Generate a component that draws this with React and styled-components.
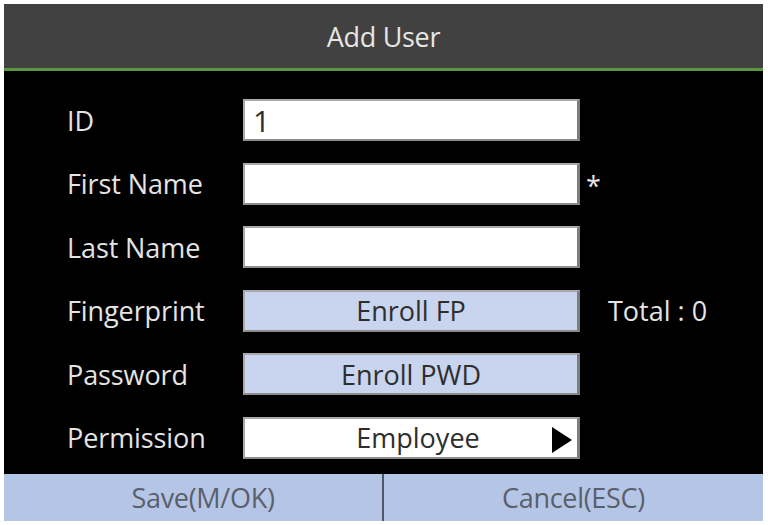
import React from 'react'
import styled, { createGlobalStyle } from 'styled-components'

const GlobalStyle = createGlobalStyle`
  html, body {
    margin: 0;
    padding: 0;
    background: #ffffff;
  }
  body {
    font-family: 'Open Sans', 'Noto Sans', sans-serif;
  }
`

const Page = styled.div`
  width: 768px;
  height: 525px;
  padding: 4px 5px 4px 4px;
  box-sizing: border-box;
`

const Screen = styled.div`
  display: flex;
  flex-direction: column;
  height: 100%;
  background: #000;
`

const Header = styled.div`
  height: 64px;
  display: flex;
  align-items: center;
  justify-content: center;
  background: #414141;
  border-bottom: 3px solid #5d9640;
  color: #e6e6e6;
  font-size: 27px;
  letter-spacing: -0.3px;
`

const Form = styled.div`
  flex: 1;
  display: grid;
  grid-template-columns: 176px 337px auto;
  grid-auto-rows: 42px;
  row-gap: 21.5px;
  align-items: center;
  padding: 28px 0 0 63px;
`

const Label = styled.div`
  color: #e4e4e4;
  font-size: 27px;
  letter-spacing: -0.1px;
`

const Field = styled.div`
  height: 42px;
  box-sizing: border-box;
  display: flex;
  align-items: center;
  justify-content: ${p => (p.$center ? 'center' : 'flex-start')};
  position: relative;
  padding: 0 8px 0 ${p => p.$indent || 8}px;
  background: ${p => (p.$button ? '#c9d4ee' : '#ffffff')};
  border: 2px solid #a9a9a9;
  border-right: 3px solid #7d7d7d;
  border-bottom-color: #8c8c8c;
  color: #2e2e2e;
  font-size: 27px;
`

const Value = styled.span`
  font-size: 30px;
`

const Arrow = styled.svg`
  position: absolute;
  right: 4px;
  top: 8px;
`

const Note = styled.div`
  color: #e4e4e4;
  font-size: 27px;
  padding-left: ${p => p.$pad || 0}px;
  align-self: ${p => (p.$top ? 'start' : 'center')};
  margin-top: ${p => (p.$top ? 4 : 0)}px;
`

const Footer = styled.div`
  height: 47px;
  display: grid;
  grid-template-columns: 378px 1fr;
  background: #b5c5e6;
`

const FooterButton = styled.div`
  display: flex;
  align-items: center;
  justify-content: center;
  padding-left: ${p => p.$shift || 0}px;
  color: #5a5f6c;
  font-size: 27px;
  letter-spacing: -0.3px;
  border-left: ${p => (p.$divider ? '2px solid #4f566a' : 'none')};
`

const rows = [
  { label: 'ID', value: '1' },
  { label: 'First Name', value: '', note: '*' },
  { label: 'Last Name', value: '' },
  { label: 'Fingerprint', button: 'Enroll FP', note: 'Total : 0' },
  { label: 'Password', button: 'Enroll PWD' },
  { label: 'Permission', select: 'Employee' },
]

export default function App() {
  return (
    <Page>
      <GlobalStyle />
      <Screen>
        <Header>Add User</Header>
        <Form>
          {rows.map((row, index) => (
            <React.Fragment key={index}>
              <Label>{row.label}</Label>
              {row.button ? (
                <Field $button $center>{row.button}</Field>
              ) : row.select ? (
                <Field $center $indent={22}>
                  {row.select}
                  <Arrow width="22" height="26" viewBox="0 0 22 26">
                    <polygon points="1,0 21,13 1,26" fill="#000" />
                  </Arrow>
                </Field>
              ) : (
                <Field>
                  <Value>{row.value}</Value>
                </Field>
              )}
              {row.note === '*' ? (
                <Note $pad={6} $top>*</Note>
              ) : row.note ? (
                <Note $pad={28}>{row.note}</Note>
              ) : (
                <div />
              )}
            </React.Fragment>
          ))}
        </Form>
        <Footer>
          <FooterButton $shift={20}>Save(M/OK)</FooterButton>
          <FooterButton $divider>Cancel(ESC)</FooterButton>
        </Footer>
      </Screen>
    </Page>
  )
}
